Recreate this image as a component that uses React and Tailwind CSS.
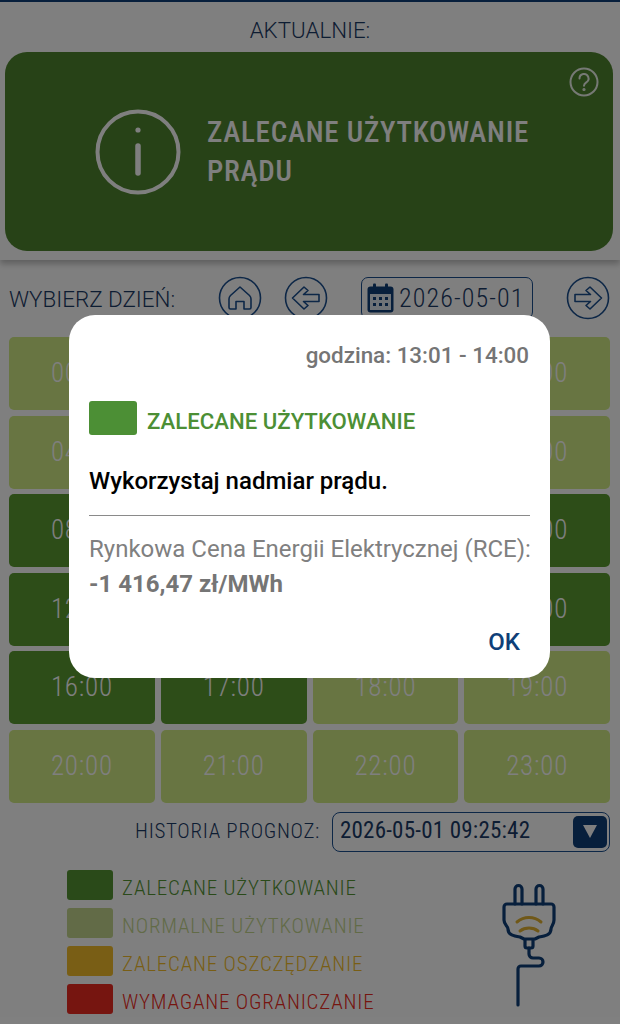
const DARK = "bg-[#5a9a30]";
const LIGHT = "bg-[#d0ea84]";

const godziny = [
  ["00:00", 0], ["01:00", 0], ["02:00", 0], ["03:00", 0],
  ["04:00", 0], ["05:00", 0], ["06:00", 0], ["07:00", 0],
  ["08:00", 1], ["09:00", 1], ["10:00", 1], ["11:00", 1],
  ["12:00", 1], ["13:00", 1], ["14:00", 1], ["15:00", 1],
  ["16:00", 1], ["17:00", 1], ["18:00", 0], ["19:00", 0],
  ["20:00", 0], ["21:00", 0], ["22:00", 0], ["23:00", 0],
];

const legenda = [
  { nazwa: "ZALECANE UŻYTKOWANIE", box: "bg-[#549433]", text: "text-[#549433]" },
  { nazwa: "NORMALNE UŻYTKOWANIE", box: "bg-[#c4d68e]", text: "text-[#c4d68e]" },
  { nazwa: "ZALECANE OSZCZĘDZANIE", box: "bg-[#f2bd2a]", text: "text-[#f2bd2a]" },
  { nazwa: "WYMAGANE OGRANICZANIE", box: "bg-[#ec2a20]", text: "text-[#ec2a20]" },
];

function RoundIcon({ children }) {
  return (
    <svg width="44" height="44" viewBox="0 0 44 44" fill="none" stroke="#1b4f8f" strokeWidth="1.6" strokeLinejoin="round" strokeLinecap="round">
      <circle cx="22" cy="22" r="20.5" />
      {children}
    </svg>
  );
}

function PlugIcon() {
  return (
    <svg width="100" height="150" viewBox="0 0 100 150" fill="none" strokeLinecap="round" strokeLinejoin="round" className="mt-[18px]">
      <g stroke="#0f3f78" strokeWidth="3.2">
        <path d="M35 34V19a3.5 3.5 0 0 1 7 0V34" />
        <path d="M56 34V19a3.5 3.5 0 0 1 7 0V34" />
        <path d="M27 34H71a3 3 0 0 1 3 3V50c0 5-3 6-3 9 0 6-6 7-12 8l-4 2H44l-4-2c-6-1-12-2-12-8 0-3-4-4-4-9V37a3 3 0 0 1 3-3Z" />
        <path d="M45 70V76a2 2 0 0 0 2 2h4a2 2 0 0 0 2-2V70" />
        <path d="M49 78V84a4 4 0 0 0 4 4H59a4 4 0 0 1 0 8H41a3 3 0 0 0-3 3V135" />
      </g>
      <g stroke="#e0b030" strokeWidth="3">
        <path d="M37 52c7-6 17-6 24 0" />
        <path d="M40 61c5-4 13-4 18 0" />
      </g>
    </svg>
  );
}

export default function App() {
  return (
    <div className="relative w-[620px] h-[1024px] overflow-hidden bg-white font-['Roboto',sans-serif] font-stretch-condensed">
      {/* pasek u gory + aktualny status */}
      <div className="h-[260px] border-t-2 border-[#0f3f78] px-[5px] shadow-[0_4px_6px_rgba(0,0,0,0.25)]">
        <p className="h-[50px] pt-[12px] text-center text-[22.3px] leading-[32px] font-light font-stretch-normal text-[#1b3a66]">AKTUALNIE:</p>
        <div className="relative flex h-[199px] w-[608px] items-center rounded-[22px] bg-[#4e842e] pl-[90px]">
          <svg width="86" height="86" viewBox="0 0 86 86" fill="none" stroke="#ffffff" strokeLinecap="round" className="shrink-0">
            <circle cx="43" cy="43" r="40.5" strokeWidth="4" />
            <path d="M43 37V64" strokeWidth="5.5" />
            <circle cx="43" cy="21" r="2.6" fill="#ffffff" stroke="none" />
          </svg>
          <p className="ml-[26px] w-[350px] text-[29px] leading-[39px] font-medium tracking-[0.75px] text-white">ZALECANE UŻYTKOWANIE PRĄDU</p>
          <svg width="30" height="30" viewBox="0 0 30 30" fill="none" stroke="#ffffff" strokeOpacity="0.9" strokeWidth="2" strokeLinecap="round" className="absolute top-[15px] right-[14px]">
            <circle cx="15" cy="15" r="13.5" />
            <path d="M10.5 11.5a4.5 4.5 0 1 1 6.8 3.8c-1.5 1-2.3 1.7-2.3 3.4" />
            <circle cx="15" cy="22.5" r="0.6" fill="#ffffff" />
          </svg>
        </div>
      </div>

      {/* wybor dnia */}
      <div className="flex h-[77px] items-start pt-[16px] pl-[9px]">
        <span className="mt-[9px] w-[209px] text-[22.4px] leading-[28px] font-light font-stretch-normal text-[#1b3a66]">WYBIERZ DZIEŃ:</span>
        <RoundIcon>
          <path d="M22 11 12.5 19.5Q11 21 11 23V31.5Q11 33 12.5 33H18V25.5H26V33H31.5Q33 33 33 31.5V23Q33 21 31.5 19.5Z" />
        </RoundIcon>
        <div className="ml-[22px]">
          <RoundIcon>
            <path d="M8.5 22 20 11 24 14.5 19.5 18.5H35V25.5H19.5L24 29.5 20 33Z" />
          </RoundIcon>
        </div>
        <div className="mt-[1px] ml-[33px] flex h-[42px] w-[172px] items-center rounded-[7px] border-[1.5px] border-[#1b4f8f] pl-[5px]">
          <svg width="27" height="30" viewBox="0 0 27 30" className="shrink-0">
            <rect x="0.5" y="3.5" width="26" height="26" rx="3" fill="#0f3f78" />
            <rect x="6" y="0.5" width="3" height="6" rx="1" fill="#0f3f78" />
            <rect x="18" y="0.5" width="3" height="6" rx="1" fill="#0f3f78" />
            <rect x="3" y="11" width="21" height="16" fill="#dfe6ee" />
            <g fill="#0f3f78">
              <rect x="6" y="14" width="3" height="3" /><rect x="12" y="14" width="3" height="3" /><rect x="18" y="14" width="3" height="3" />
              <rect x="6" y="20" width="3" height="3" /><rect x="12" y="20" width="3" height="3" /><rect x="18" y="20" width="3" height="3" />
            </g>
          </svg>
          <span className="ml-[5px] text-[26px] leading-none font-light tracking-[1.1px] text-[#1b3a66]">2026-05-01</span>
        </div>
        <div className="ml-[33px]">
          <RoundIcon>
            <path d="M35.5 22 24 11 20 14.5 24.5 18.5H9V25.5H24.5L20 29.5 24 33Z" />
          </RoundIcon>
        </div>
      </div>

      {/* siatka godzin */}
      <div className="ml-[9px] grid w-[601px] grid-cols-4 gap-x-[6px] gap-y-[5.5px]">
        {godziny.map(([h, d]) => (
          <div key={h} className={`flex h-[73px] items-center justify-center rounded-[5px] text-[27px] font-light tracking-[0.8px] text-white ${d ? DARK : LIGHT}`}>
            {h}
          </div>
        ))}
      </div>

      {/* historia prognoz */}
      <div className="mt-[9px] flex h-[40px] items-center justify-end pr-[10px]">
        <span className="mr-[12px] text-[21px] font-light tracking-[0.7px] text-[#1b3a66]">HISTORIA PROGNOZ:</span>
        <div className="flex h-[40px] w-[278px] items-center justify-between rounded-[8px] border-[1.5px] border-[#1b4f8f] pr-[2px] pl-[7px]">
          <span className="text-[23px] font-normal tracking-[0.2px] text-[#1b3a66]">2026-05-01 09:25:42</span>
          <div className="flex h-[32px] w-[34px] items-center justify-center rounded-[5px] bg-[#0f3f78]">
            <svg width="14" height="13" viewBox="0 0 14 13"><path d="M0 0H14L7 13Z" fill="#ffffff" /></svg>
          </div>
        </div>
      </div>

      {/* legenda */}
      <div className="flex pl-[67px]">
        <div className="mt-[18px] flex w-[413px] flex-col gap-[7.5px]">
          {legenda.map((l) => (
            <div key={l.nazwa} className="flex h-[30.5px] items-center">
              <div className={`h-[30.5px] w-[46px] rounded-[3px] ${l.box}`} />
              <span className={`mt-[6px] ml-[9px] text-[21px] leading-[24px] font-light tracking-[0.8px] ${l.text}`}>{l.nazwa}</span>
            </div>
          ))}
        </div>
        <PlugIcon />
      </div>

      {/* przyciemnienie tla */}
      <div className="absolute inset-0 bg-black/50" />

      {/* dialog */}
      <div className="absolute top-[315px] left-[69px] h-[363px] w-[481px] rounded-[26px] bg-white px-[20px] font-stretch-normal">
        <p className="mt-[26px] pr-[1px] text-right text-[22.4px] leading-[28px] font-medium text-[#757575]">godzina: 13:01 - 14:00</p>
        <div className="mt-[32px] flex items-center">
          <div className="h-[34px] w-[48px] rounded-[3px] bg-[#4c8f35]" />
          <span className="mt-[6px] ml-[10px] text-[22.2px] leading-none font-medium text-[#4c8f35]">ZALECANE UŻYTKOWANIE</span>
        </div>
        <p className="mt-[30px] border-b-[1.5px] border-[#8a8a8a] pb-[18px] text-[24px] leading-[32px] font-medium text-black">Wykorzystaj nadmiar prądu.</p>
        <p className="mt-[15px] text-[24px] leading-[36px] whitespace-nowrap text-[#808080]">Rynkowa Cena Energii Elektrycznej (RCE):</p>
        <p className="text-[24px] leading-[35px] font-bold text-[#757575]">-1 416,47 zł/MWh</p>
        <p className="mt-[24px] pr-[10px] text-right text-[24px] leading-[32px] font-medium text-[#0f3f78]">OK</p>
      </div>
    </div>
  );
}
